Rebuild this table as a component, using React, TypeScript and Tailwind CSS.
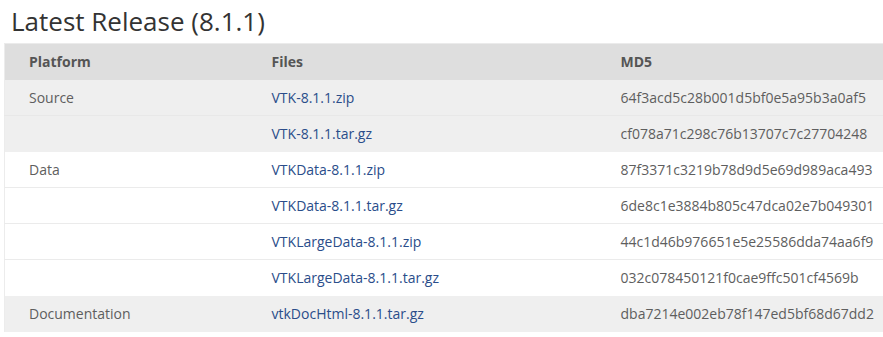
import React from "react";

const rows: { platform: string; file: string; md5: string; shaded: boolean; first: boolean }[] = [
  { platform: "Source", file: "VTK-8.1.1.zip", md5: "64f3acd5c28b001d5bf0e5a95b3a0af5", shaded: true, first: true },
  { platform: "", file: "VTK-8.1.1.tar.gz", md5: "cf078a71c298c76b13707c7c27704248", shaded: true, first: false },
  { platform: "Data", file: "VTKData-8.1.1.zip", md5: "87f3371c3219b78d9d5e69d989aca493", shaded: false, first: true },
  { platform: "", file: "VTKData-8.1.1.tar.gz", md5: "6de8c1e3884b805c47dca02e7b049301", shaded: false, first: false },
  { platform: "", file: "VTKLargeData-8.1.1.zip", md5: "44c1d46b976651e5e25586dda74aa6f9", shaded: false, first: false },
  { platform: "", file: "VTKLargeData-8.1.1.tar.gz", md5: "032c078450121f0cae9ffc501cf4569b", shaded: false, first: false },
  { platform: "Documentation", file: "vtkDocHtml-8.1.1.tar.gz", md5: "dba7214e002eb78f147ed5bf68d67dd2", shaded: true, first: true },
];

export default function App() {
  return (
    <div className="w-[883px] h-[337px] bg-white overflow-hidden" style={{ fontFamily: '"Open Sans", sans-serif' }}>
      <h2 className="h-[43px] pl-[11px] pt-[3px] text-[26px] leading-[36px] text-[#333333] font-normal">
        Latest Release (8.1.1)
      </h2>
      <table className="ml-[4px] w-[879px] table-fixed border-collapse border-l border-[#ececec] text-[14px] text-[#5e5e5e]">
        <colgroup>
          <col className="w-[242px]" />
          <col className="w-[349px]" />
          <col className="w-[288px]" />
        </colgroup>
        <thead>
          <tr className="h-[36px] bg-[#dedede] border-t border-[#ebebeb]">
            <th className="pl-[24px] text-left font-bold text-[#555555]">Platform</th>
            <th className="pl-[25px] text-left font-bold text-[#555555]">Files</th>
            <th className="pl-[25px] text-left font-bold text-[#555555]">MD5</th>
          </tr>
        </thead>
        <tbody>
          {rows.map((r, i) => (
            <tr
              key={i}
              className={`h-[36px] ${r.shaded ? "bg-[#efefef]" : "bg-white"} ${
                r.first ? "" : r.shaded ? "border-t border-[#e8e8e8]" : "border-t border-[#ebebeb]"
              }`}
            >
              <td className="pl-[24px]">{r.platform}</td>
              <td className="pl-[25px]">
                <a className="text-[#2a4d8a]">{r.file}</a>
              </td>
              <td className="pl-[25px]">{r.md5}</td>
            </tr>
          ))}
        </tbody>
      </table>
    </div>
  );
}
